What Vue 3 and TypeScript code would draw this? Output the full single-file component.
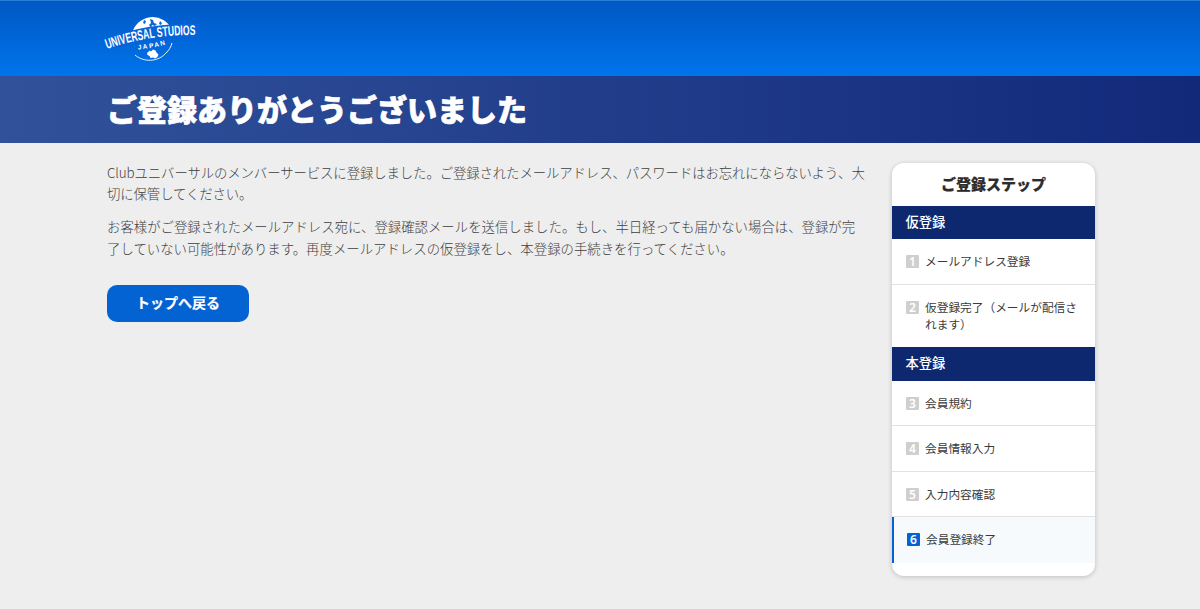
<script setup lang="ts">
interface Step { n: number; label: string; current?: boolean }
const groups: { title: string; steps: Step[] }[] = [
  { title: '仮登録', steps: [
    { n: 1, label: 'メールアドレス登録' },
    { n: 2, label: '仮登録完了（メールが配信されます）' },
  ] },
  { title: '本登録', steps: [
    { n: 3, label: '会員規約' },
    { n: 4, label: '会員情報入力' },
    { n: 5, label: '入力内容確認' },
    { n: 6, label: '会員登録終了', current: true },
  ] },
]
</script>

<template>
  <div class="page">
    <header class="top">
      <svg class="logo" viewBox="0 0 110 60" width="110" height="60" role="img" aria-label="Universal Studios Japan">
        <defs>
          <path id="logo-arc" d="M7 39 Q50 24 102 25" />
          <path id="logo-sub" d="M38 39.5 Q52 38.5 68 34" />
        </defs>
        <path d="M32 24 A21 21 0 0 1 72 20 L72 24 L32 32 Z" fill="#fff" />
        <path d="M50 9 l3 1 1 3 3 1 -2 2 -3 -1 -1 3 -2 -3 2 -2z M44 10 l2 1 -1 3 -2 -1z M60 11 l2 2 -1 2 -2 -1z M63 16 l3 2 -1 1 -3 -1z" fill="#0a68d8" />
        <path d="M9 34 Q50 19 100 20" fill="none" stroke="#0863d6" stroke-width="13" />
        <text class="logo-main" fill="#fff" textLength="90" lengthAdjust="spacingAndGlyphs">
          <textPath href="#logo-arc">UNIVERSAL STUDIOS</textPath>
        </text>
        <text class="logo-small" fill="#fff" textLength="28">
          <textPath href="#logo-sub">JAPAN</textPath>
        </text>
        <path d="M47 43 l3 -2.5 1 1 2 -2 2.5 1 1 2 2 2 -1 2.5 -2.5 1.5 -2 -1 -2.5 .5 -1 -2 -2 -1z" fill="#fff" />
        <path d="M35 45 C43 52 58 53 67 42 C69 40 71 37 72 33" fill="none" stroke="#fff" stroke-width="0.9" />
      </svg>
    </header>
    <div class="band"><h1>ご登録ありがとうございました</h1></div>
    <main class="body">
      <section class="content">
        <p class="lead">Clubユニバーサルのメンバーサービスに登録しました。ご登録されたメールアドレス、パスワードはお忘れにならないよう、大切に保管してください。</p>
        <p>お客様がご登録されたメールアドレス宛に、登録確認メールを送信しました。もし、半日経っても届かない場合は、登録が完了していない可能性があります。再度メールアドレスの仮登録をし、本登録の手続きを行ってください。</p>
        <a class="btn">トップへ戻る</a>
      </section>
      <aside class="side">
        <div class="side-title">ご登録ステップ</div>
        <template v-for="g in groups" :key="g.title">
          <div class="group">{{ g.title }}</div>
          <ol class="steps">
            <li v-for="s in g.steps" :key="s.n" class="step" :class="{ current: s.current }">
              <span class="num">{{ s.n }}</span>
              <span class="label">{{ s.label }}</span>
            </li>
          </ol>
        </template>
      </aside>
    </main>
  </div>
</template>

<style>
html, body { margin: 0; background: #eeeeee; }
</style>

<style scoped>
.page {
  height: 609px;
  overflow: hidden;
  background: #eeeeee;
  font-family: "Noto Sans CJK JP", "Noto Sans", sans-serif;
  color: #333;
}
.top {
  height: 76px;
  box-sizing: border-box;
  padding: 9px 0 0 100px;
  background: linear-gradient(180deg, #0058c4 0%, #0074ec 100%);
  border-top: 1px solid #2a7fd8;
}
.logo { display: block; }
.logo-main {
  font-family: "Liberation Sans", sans-serif;
  font-weight: 700;
  font-size: 14px;
}
.logo-small {
  font-family: "Liberation Sans", sans-serif;
  font-weight: 700;
  font-size: 6.5px;
}
.band {
  height: 67px;
  box-sizing: border-box;
  display: flex;
  align-items: center;
  padding: 0 0 4px 107px;
  background: linear-gradient(90deg, #31529b 0%, #12297a 100%);
}
h1 {
  margin: 0;
  color: #fff;
  font-size: 30px;
  font-weight: 900;
  line-height: 1;
  -webkit-text-stroke: 0.7px #fff;
}
.body {
  display: flex;
  justify-content: space-between;
  padding: 20px 105px 0 107px;
}
.content { width: 761px; margin-top: -1.5px; }
p {
  margin: 0 0 12px;
  font-size: 13.4px;
  line-height: 21.44px;
  font-weight: 300;
  color: #3f3f3f;
}
.lead { letter-spacing: -0.1px; }
.btn {
  display: flex;
  align-items: center;
  justify-content: center;
  box-sizing: border-box;
  padding-bottom: 2px;
  margin-top: 25.5px;
  width: 142px;
  height: 37px;
  border-radius: 10px;
  background: #0363d3;
  color: #fff;
  font-size: 14px;
  font-weight: 700;
  -webkit-text-stroke: 0.2px #fff;
}
.side {
  width: 203px;
  height: 413px;
  background: #fff;
  border-radius: 12px;
  box-shadow: 0 1px 5px rgba(0, 0, 0, .2);
  overflow: hidden;
}
.side-title {
  height: 42.5px;
  box-sizing: border-box;
  padding-bottom: 2px;
  display: flex;
  align-items: center;
  justify-content: center;
  font-size: 15px;
  font-weight: 900;
  color: #2c2c2c;
  -webkit-text-stroke: 0.2px #2c2c2c;
}
.group {
  height: 33.5px;
  box-sizing: border-box;
  padding: 0 0 2px 13.5px;
  display: flex;
  align-items: center;
  background: #0e286f;
  color: #fff;
  font-size: 13.3px;
  font-weight: 500;
}
.steps { list-style: none; margin: 0; padding: 0; }
.step {
  display: flex;
  align-items: flex-start;
  gap: 6px;
  padding: 14px 14px 13.5px;
  font-size: 11.7px;
  line-height: 17px;
  border-bottom: 1px solid #e2e2e2;
  color: #3a3a3a;
}
.step:last-child { border-bottom: 0; padding-bottom: 14.5px; }
.label { position: relative; top: -1px; }
.num {
  flex: none;
  width: 13px;
  height: 13px;
  margin-top: 2px;
  border-radius: 1px;
  background: #cfcfcf;
  color: #fff;
  font-family: "Noto Sans", sans-serif;
  font-size: 12px;
  font-weight: 600;
  line-height: 13px;
  text-align: center;
}
.current {
  background: #f6fafd;
  border-left: 2px solid #0363d3;
  padding-left: 13px;
}
.current .num { background: #0363d3; }
</style>
